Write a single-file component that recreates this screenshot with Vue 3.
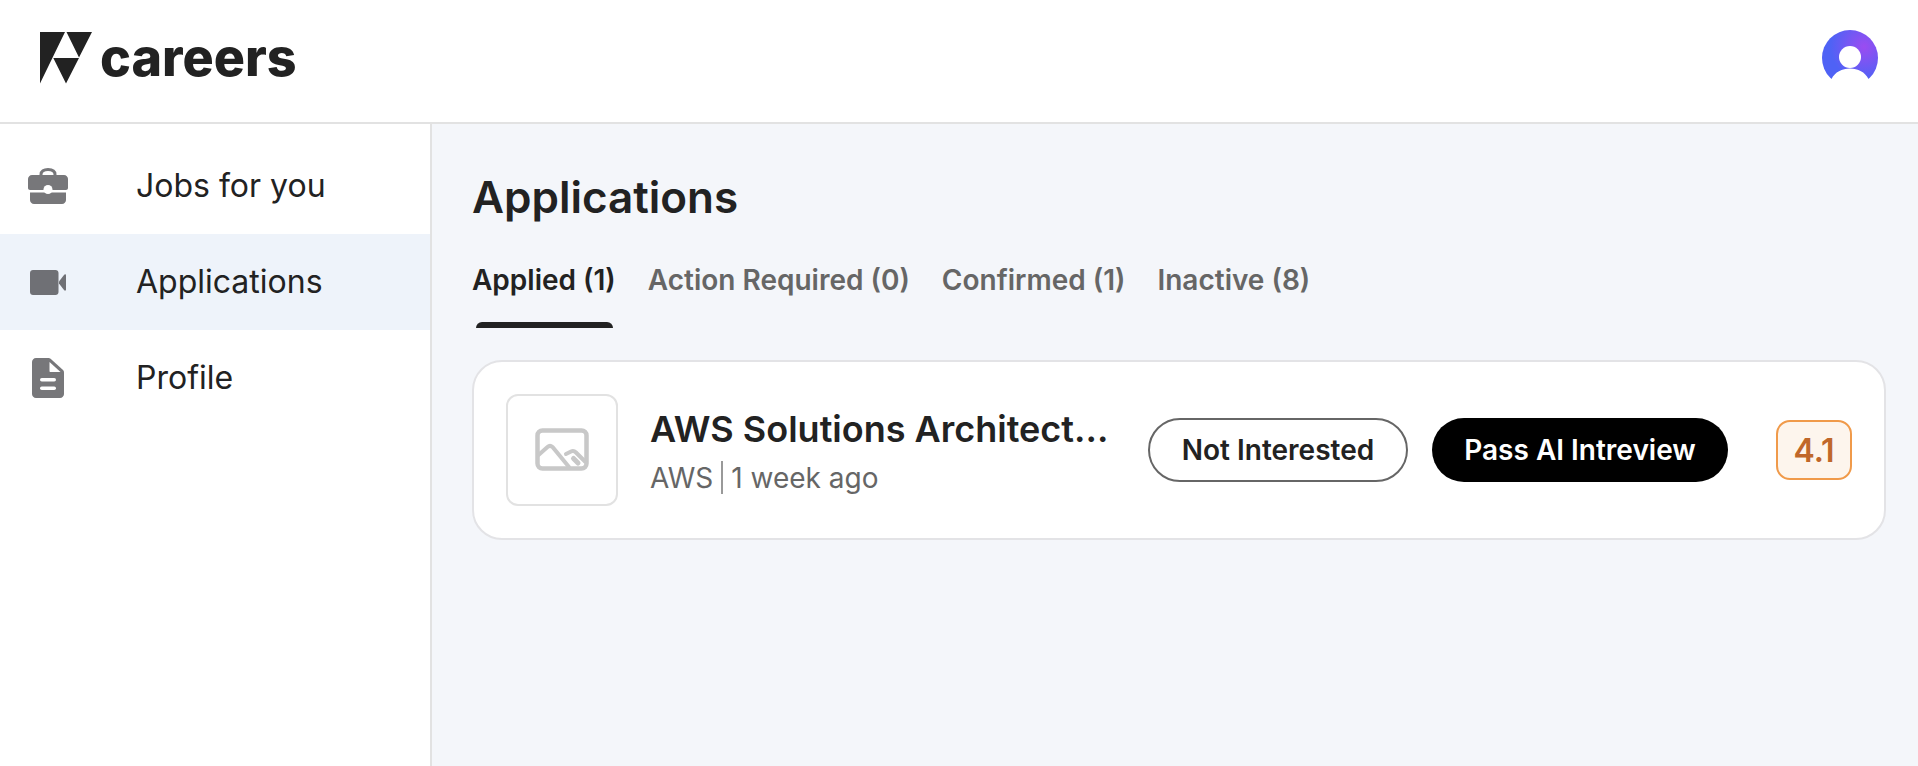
<template>
  <div class="page">
    <header class="topbar">
      <div class="brand">
        <svg class="logo" viewBox="0 0 52 52" width="52" height="52">
          <path d="M0 0H25L0 51.500Z M26.500 0H52L39 25.500Z M13.300 26H39L26 51.500Z" fill="#222" />
        </svg>
        <span class="brand-name">careers</span>
      </div>
      <svg class="avatar" viewBox="0 0 56 56" width="56" height="56">
        <defs>
          <radialGradient id="avatarGlow" cx="0.75" cy="0.3" r="0.6">
            <stop offset="0" stop-color="#9b4cf1" />
            <stop offset="1" stop-color="#4f62f5" />
          </radialGradient>
        </defs>
        <circle cx="28" cy="28" r="28" fill="url(#avatarGlow)" />
        <circle cx="28" cy="27" r="11" fill="#fff" />
        <path d="M0 56V49H9.500C13 42 20 38.500 28 38.500S43 42 46.500 49H56V56Z" fill="#fff" />
      </svg>
    </header>

    <div class="body">
      <aside class="sidebar">
        <a
          v-for="item in navItems"
          :key="item.label"
          class="nav-item"
          :class="{ active: item.label === 'Applications' }"
        >
          <span class="nav-icon">
            <svg v-if="item.icon === 'briefcase'" viewBox="0 0 40 36" width="40" height="36">
              <path d="M13 8V6.500C13 3.200 15.800 1.500 20 1.500S27 3.200 27 6.500V8" fill="none" stroke="#77777a" stroke-width="3" />
              <path d="M4 7H36C38.200 7 40 8.800 40 11V20C40 21.100 39.100 22 38 22H2C0.900 22 0 21.100 0 20V11C0 8.800 1.800 7 4 7Z" fill="#77777a" />
              <path d="M2 24.500H38V32C38 34.200 36.200 36 34 36H6C3.800 36 2 34.200 2 32Z" fill="#77777a" />
              <circle cx="20" cy="21.500" r="4.500" fill="#fff" />
            </svg>
            <svg v-else-if="item.icon === 'video'" viewBox="0 0 36 25" width="36" height="25">
              <path d="M3 0H25.500C27.200 0 28.500 1.300 28.500 3V22C28.500 23.700 27.200 25 25.500 25H3C1.300 25 0 23.700 0 22V3C0 1.300 1.300 0 3 0Z" fill="#6f7075" />
              <path d="M29 11.500L34 5C35 3.800 36 4.400 36 5.500V19.500C36 20.600 35 21.200 34 20L29 13.500Z" fill="#6f7075" />
            </svg>
            <svg v-else viewBox="0 0 32 40" width="32" height="40">
              <path d="M4 0H16.500C17.300 0 18 0.300 18.600 0.800L31 12C31.600 12.600 32 13.400 32 14.200V36C32 38.200 30.200 40 28 40H4C1.800 40 0 38.200 0 36V4C0 1.800 1.800 0 4 0Z" fill="#77777a" />
              <path d="M17.500 4L28.500 14H18.500C17.900 14 17.500 13.600 17.500 13Z" fill="#fff" />
              <rect x="8" y="20" width="16" height="3.500" rx="1.750" fill="#fff" />
              <rect x="8" y="28.500" width="16" height="3.500" rx="1.750" fill="#fff" />
            </svg>
          </span>
          <span class="nav-label">{{ item.label }}</span>
        </a>
      </aside>

      <main class="content">
        <h1 class="title">Applications</h1>
        <nav class="tabs">
          <div
            v-for="(tab, i) in tabs"
            :key="tab"
            class="tab"
            :class="{ selected: i === 0 }"
          >
            {{ tab }}
          </div>
        </nav>

        <section class="card">
          <div class="thumb">
            <svg viewBox="0 0 54 44" width="54" height="44" fill="none" stroke="#c8c8c8" stroke-linecap="round">
              <rect x="2.500" y="2.500" width="49" height="38" rx="5" stroke-width="4.500" />
              <path d="M3.500 27L12.500 19C14 17.700 16 17.700 17.500 19L34 39" stroke-width="4" />
              <path d="M31 26L36 23.500C38 22.500 39.500 23 41 24.500L50 33.500" stroke-width="4" />
              <path d="M38.500 30.500L43 35" stroke-width="5" />
            </svg>
          </div>
          <div class="info">
            <div class="job-title">AWS Solutions Architect...</div>
            <div class="meta">
              <span>AWS</span>
              <i class="sep"></i>
              <span>1 week ago</span>
            </div>
          </div>
          <button type="button" class="btn btn-outline">Not Interested</button>
          <button type="button" class="btn btn-dark">Pass AI Intreview</button>
          <div class="score">4.1</div>
        </section>
      </main>
    </div>
  </div>
</template>

<script setup>
const navItems = [
  { label: 'Jobs for you', icon: 'briefcase' },
  { label: 'Applications', icon: 'video' },
  { label: 'Profile', icon: 'doc' }
]

const tabs = ['Applied (1)', 'Action Required (0)', 'Confirmed (1)', 'Inactive (8)']
</script>

<style>
html,
body {
  margin: 0;
  overflow: hidden;
}
</style>

<style scoped>
.page {
  height: 766px;
  display: flex;
  flex-direction: column;
  font-family: Inter, "Liberation Sans", sans-serif;
  color: #222;
  background: #fff;
}

.topbar {
  height: 122px;
  flex: none;
  box-sizing: content-box;
  display: flex;
  align-items: center;
  justify-content: space-between;
  padding: 0 40px;
  border-bottom: 2px solid #e2e2e2;
}

.brand,
.avatar {
  margin-bottom: 6px;
}

.brand {
  display: flex;
  align-items: center;
  gap: 8px;
}

.logo {
  display: block;
}

.brand-name {
  font-size: 52px;
  font-weight: 800;
  line-height: 52px;
  color: #222;
}

.avatar {
  display: block;
}

.body {
  flex: 1;
  display: flex;
  min-height: 0;
}

.sidebar {
  width: 430px;
  flex: none;
  padding-top: 14px;
  border-right: 2px solid #e2e2e2;
}

.nav-item {
  height: 96px;
  display: flex;
  align-items: center;
}

.nav-item.active {
  background: #eef3fa;
}

.nav-icon {
  width: 96px;
  margin-right: 40px;
  display: flex;
  justify-content: center;
}

.nav-icon svg {
  display: block;
}

.nav-label {
  padding-bottom: 2px;
  font-size: 32px;
  color: #222;
}

.content {
  flex: 1;
  padding: 47px 32px 0 40px;
  background: #f4f6fa;
}

.title {
  margin: 0;
  font-size: 44px;
  font-weight: 600;
  line-height: 52px;
  color: #222;
}

.tabs {
  display: flex;
  gap: 32px;
  margin-top: 24px;
}

.tab {
  height: 81px;
  box-sizing: border-box;
  padding-top: 16px;
  font-size: 28px;
  font-weight: 600;
  color: #666;
  position: relative;
}

.tab.selected {
  color: #222;
}

.tab.selected::after {
  content: "";
  position: absolute;
  left: 4px;
  right: 3px;
  bottom: 0;
  height: 6px;
  background: #222;
  border-radius: 6px 6px 0 0;
}

.card {
  margin-top: 32px;
  height: 180px;
  box-sizing: border-box;
  display: flex;
  align-items: center;
  padding: 0 32px;
  background: #fff;
  border: 2px solid #e3e3e6;
  border-radius: 30px;
}

.thumb {
  width: 112px;
  height: 112px;
  flex: none;
  box-sizing: border-box;
  display: flex;
  align-items: center;
  justify-content: center;
  border: 2px solid #e2e2e2;
  border-radius: 12px;
}

.info {
  flex: 1;
  min-width: 0;
  margin-left: 32px;
}

.job-title {
  font-size: 36px;
  font-weight: 600;
  line-height: 46px;
  color: #222;
}

.meta {
  display: flex;
  align-items: center;
  margin-top: 9px;
  font-size: 28px;
  line-height: 34px;
  color: #666;
}

.sep {
  width: 2px;
  height: 33px;
  margin: 0 8px;
  background: #999;
}

.btn {
  height: 64px;
  flex: none;
  box-sizing: border-box;
  border-radius: 32px;
  font-family: inherit;
  font-size: 28px;
  font-weight: 600;
}

.btn-outline {
  width: 260px;
  background: #fff;
  border: 2px solid #666;
  color: #222;
}

.btn-dark {
  width: 296px;
  margin-left: 24px;
  background: #000;
  border: none;
  color: #fff;
}

.score {
  width: 76px;
  height: 60px;
  flex: none;
  box-sizing: border-box;
  margin-left: 48px;
  display: flex;
  align-items: center;
  justify-content: center;
  background: #fdf5ed;
  border: 2px solid #f09a4a;
  border-radius: 14px;
  font-size: 32px;
  font-weight: 600;
  color: #c0672a;
}
</style>
